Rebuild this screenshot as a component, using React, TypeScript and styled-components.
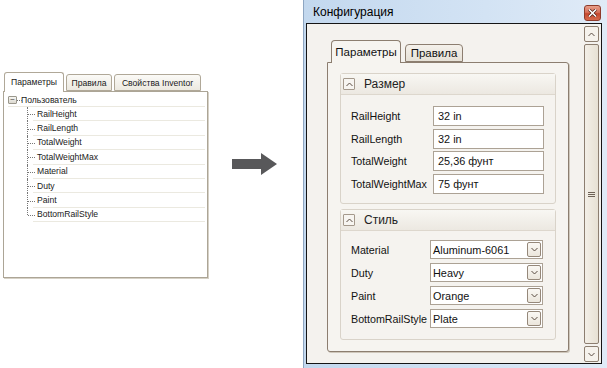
import React from "react";
import styled, { createGlobalStyle } from "styled-components";

const GlobalStyle = createGlobalStyle`
  html, body { margin: 0; padding: 0; background: #fff; }
  body { font-family: "Liberation Sans", Arial, sans-serif; }
  * { box-sizing: border-box; }
`;

const treeItems = ["RailHeight", "RailLength", "TotalWeight", "TotalWeightMax", "Material", "Duty", "Paint", "BottomRailStyle"];

const sizeFields = [
  { label: "RailHeight", value: "32 in" },
  { label: "RailLength", value: "32 in" },
  { label: "TotalWeight", value: "25,36 фунт" },
  { label: "TotalWeightMax", value: "75 фунт" },
];

const styleFields = [
  { label: "Material", value: "Aluminum-6061" },
  { label: "Duty", value: "Heavy" },
  { label: "Paint", value: "Orange" },
  { label: "BottomRailStyle", value: "Plate" },
];

const Chevron = ({ up }: { up?: boolean }) => (
  <svg width="7" height="5" viewBox="0 0 7 5">
    <polyline points={up ? "0.5,4 3.5,1 6.5,4" : "0.5,1 3.5,4 6.5,1"} fill="none" stroke="#5a4d42" strokeWidth="1" />
  </svg>
);

export default function App() {
  return (
    <>
      <GlobalStyle />
      <Page>
        <LeftPanel>
          <SmallTabRow>
            <SmallTab active width={60}>Параметры</SmallTab>
            <SmallTab width={46}>Правила</SmallTab>
            <SmallTab width={87}>Свойства Inventor</SmallTab>
          </SmallTabRow>
          <TreeBox>
            <RootRow>
              <MinusBox>−</MinusBox>
              <RootLabel>Пользователь</RootLabel>
            </RootRow>
            <TreeChildren>
              {treeItems.map((item, i) => (
                <TreeRow key={item} last={i === treeItems.length - 1}>
                  <TreeLabel>{item}</TreeLabel>
                </TreeRow>
              ))}
            </TreeChildren>
          </TreeBox>
        </LeftPanel>

        <ArrowBox>
          <svg width="47" height="23" viewBox="0 0 47 23">
            <polygon points="0,6 29,6 29,0 45,11 29,22 29,16 0,16" fill="#58585a" />
          </svg>
        </ArrowBox>

        <Window>
          <TitleBar>
            <Title>Конфигурация</Title>
            <CloseButton>
              <svg width="9" height="8" viewBox="0 0 9 8">
                <path d="M1 0.5 L8 7.5 M8 0.5 L1 7.5" stroke="#4a1a10" strokeWidth="3" />
                <path d="M1 0.5 L8 7.5 M8 0.5 L1 7.5" stroke="#fff" strokeWidth="1.6" />
              </svg>
            </CloseButton>
          </TitleBar>
          <Client>
            <ClientContent>
              <TabRow>
                <Tab active width={70}>Параметры</Tab>
                <Tab width={58}>Правила</Tab>
              </TabRow>
              <TabPanel>
                <Group>
                  <GroupHeader>
                    <ExpandButton><Chevron up /></ExpandButton>
                    <GroupTitle>Размер</GroupTitle>
                  </GroupHeader>
                  <GroupBody top={11} gap={2.7}>
                    {sizeFields.map(f => (
                      <FieldRow key={f.label} labelWidth={82}>
                        <FieldLabel>{f.label}</FieldLabel>
                        <TextInput>{f.value}</TextInput>
                      </FieldRow>
                    ))}
                  </GroupBody>
                </Group>
                <Group>
                  <GroupHeader>
                    <ExpandButton><Chevron up /></ExpandButton>
                    <GroupTitle>Стиль</GroupTitle>
                  </GroupHeader>
                  <GroupBody top={9} gap={4}>
                    {styleFields.map(f => (
                      <FieldRow key={f.label} labelWidth={79}>
                        <FieldLabel>{f.label}</FieldLabel>
                        <Combo>
                          <ComboText>{f.value}</ComboText>
                          <ComboButton><Chevron /></ComboButton>
                        </Combo>
                      </FieldRow>
                    ))}
                  </GroupBody>
                </Group>
              </TabPanel>
            </ClientContent>
            <ScrollBar>
              <ScrollButton><Chevron up /></ScrollButton>
              <ScrollThumb>
                <Grip>
                  <span />
                  <span />
                  <span />
                </Grip>
              </ScrollThumb>
              <ScrollButton><Chevron /></ScrollButton>
            </ScrollBar>
          </Client>
        </Window>
      </Page>
    </>
  );
}

const Page = styled.div`
  display: flex;
  align-items: flex-start;
  width: 607px;
  height: 368px;
  overflow: hidden;
  background: #fff;
`;

/* ---------- left picture ---------- */

const LeftPanel = styled.div`
  width: 205px;
  margin: 72px 0 0 3px;
  font-family: "Liberation Sans", Arial, sans-serif;
  font-size: 8.6px;
  color: #1a1a1a;
`;

const SmallTabRow = styled.div`
  display: flex;
  align-items: flex-end;
  gap: 2px;
  height: 19px;
  padding-left: 1px;
  position: relative;
  z-index: 1;
`;

const SmallTab = styled.div<{ active?: boolean; width: number }>`
  width: ${p => p.width}px;
  height: ${p => (p.active ? 20 : 17)}px;
  margin-bottom: ${p => (p.active ? -1 : 0)}px;
  display: flex;
  align-items: center;
  justify-content: center;
  padding-bottom: ${p => (p.active ? 2 : 0)}px;
  border: 1px solid #b0a898;
  border-bottom: ${p => (p.active ? "none" : "1px solid #b0a898")};
  border-radius: 3px 3px 0 0;
  background: ${p => (p.active ? "#fff" : "linear-gradient(#fbfaf7, #ece9e0)")};
  white-space: nowrap;
`;

const TreeBox = styled.div`
  height: 187px;
  border: 1px solid #aca596;
  box-shadow: 1px 1px 0 #d6d1c6;
  background: #fff;
  padding-top: 1px;
`;

const RootRow = styled.div`
  display: flex;
  align-items: center;
  height: 14px;
  margin-left: 4px;
  margin-right: 2px;
  border-bottom: 1px solid #ebe9e0;
`;

const MinusBox = styled.div`
  width: 9px;
  height: 8px;
  border: 1px solid #9a978c;
  border-radius: 1px;
  background: linear-gradient(#f6f6f2, #dcd9d0);
  font-size: 8px;
  line-height: 5px;
  text-align: center;
  color: #444;
  position: relative;
  &::after {
    content: "";
    position: absolute;
    left: 8px;
    top: 3px;
    width: 5px;
    border-top: 1px dotted #777;
  }
`;

const RootLabel = styled.span`
  margin-left: 4px;
`;

const TreeChildren = styled.div`
  margin-left: 23px;
  margin-right: 2px;
`;

const TreeRow = styled.div<{ last?: boolean }>`
  position: relative;
  height: 14.4px;
  display: flex;
  align-items: center;
  padding-left: 10px;
  &::before {
    content: "";
    position: absolute;
    left: 0;
    top: 0;
    height: ${p => (p.last ? "50%" : "100%")};
    border-left: 1px dotted #777;
  }
  &::after {
    content: "";
    position: absolute;
    left: 1px;
    top: 50%;
    width: 7px;
    border-top: 1px dotted #777;
  }
`;

const TreeLabel = styled.span`
  flex: 1;
  height: 100%;
  display: flex;
  align-items: center;
  border-bottom: 1px solid #ebe9e0;
  margin-left: -4px;
  padding-left: 4px;
`;

const ArrowBox = styled.div`
  margin: 153px 0 0 24px;
  display: flex;
`;

/* ---------- window ---------- */

const Window = styled.div`
  margin-left: auto;
  width: 304px;
  height: 368px;
  display: flex;
  flex-direction: column;
  border-left: 1px solid #8ea6c2;
  background: linear-gradient(90deg, #c3d8ee 0%, #d3e3f4 60%, #e0ebf7 100%);
  font-family: "Liberation Sans", Arial, sans-serif;
  color: #111;
`;

const TitleBar = styled.div`
  height: 23px;
  display: flex;
  align-items: center;
  justify-content: space-between;
  padding: 0 6px 0 9px;
`;

const Title = styled.span`
  font-size: 12px;
  color: #000;
`;

const CloseButton = styled.div`
  width: 17px;
  height: 16px;
  margin-top: 2px;
  display: flex;
  align-items: center;
  justify-content: center;
  border: 1px solid #8d3b2b;
  border-radius: 3px;
  background: linear-gradient(#e8a08c 0%, #d7705a 45%, #c5482f 55%, #d66a4c 100%);
`;

const Client = styled.div`
  flex: 1;
  display: flex;
  margin: 0 5px 4px 2px;
  border: 1px solid #151515;
  background: #f4f2ee;
`;

const ClientContent = styled.div`
  flex: 1;
  padding: 16px 0 0 20px;
`;

const TabRow = styled.div`
  display: flex;
  align-items: flex-end;
  gap: 4px;
  height: 22px;
  padding-left: 4px;
  position: relative;
  z-index: 1;
`;

const Tab = styled.div<{ active?: boolean; width: number }>`
  width: ${p => p.width}px;
  height: ${p => (p.active ? 23 : 18)}px;
  margin-bottom: ${p => (p.active ? -1 : 0)}px;
  display: flex;
  align-items: center;
  justify-content: center;
  padding-bottom: ${p => (p.active ? 1 : 0)}px;
  border: 1px solid #8c7e70;
  border-bottom: ${p => (p.active ? "none" : "1px solid #8c7e70")};
  border-radius: 4px 4px 0 0;
  background: ${p => (p.active ? "#f6f4f0" : "linear-gradient(#f4f1eb, #e6e1d7)")};
  font-size: 11.5px;
  white-space: nowrap;
`;

const TabPanel = styled.div`
  width: 242px;
  height: 290px;
  display: flex;
  flex-direction: column;
  gap: 5px;
  padding: 10px 12px 0 12px;
  border: 1px solid #8c7e70;
  border-radius: 0 3px 3px 3px;
  box-shadow: 1px 1px 0 #cfc7bb;
  background: #f6f4f0;
`;

const Group = styled.div`
  height: 131px;
  border: 1px solid #d9d3c9;
  border-radius: 3px;
  background: #f5f3ef;
`;

const GroupHeader = styled.div`
  height: 21px;
  display: flex;
  align-items: center;
  gap: 9px;
  padding-left: 2px;
  border-bottom: 1px solid #ddd7cd;
  background: linear-gradient(#f8f7f3, #ece8e1);
`;

const ExpandButton = styled.div`
  width: 12px;
  height: 12px;
  display: flex;
  align-items: center;
  justify-content: center;
  border: 1px solid #a4998c;
  border-radius: 1px;
  background: #f7f5f1;
`;

const GroupTitle = styled.span`
  font-size: 12px;
  color: #222;
`;

const GroupBody = styled.div<{ top: number; gap: number }>`
  display: flex;
  flex-direction: column;
  gap: ${p => p.gap}px;
  padding: ${p => p.top}px 0 0 10px;
`;

const FieldRow = styled.div<{ labelWidth: number }>`
  display: grid;
  grid-template-columns: ${p => p.labelWidth}px auto;
  align-items: center;
`;

const FieldLabel = styled.span`
  font-size: 10.7px;
  color: #111;
  white-space: nowrap;
`;

const TextInput = styled.div`
  width: 111px;
  height: 20px;
  display: flex;
  align-items: center;
  padding-left: 4px;
  border: 1px solid #aca295;
  background: #fff;
  font-size: 10.9px;
`;

const Combo = styled.div`
  width: 113px;
  height: 19px;
  display: flex;
  align-items: center;
  justify-content: space-between;
  padding: 0 1px 0 2px;
  border: 1px solid #aca295;
  background: #fff;
`;

const ComboText = styled.span`
  font-size: 10.9px;
`;

const ComboButton = styled.div`
  width: 14px;
  height: 15px;
  display: flex;
  align-items: center;
  justify-content: center;
  border: 1px solid #95887a;
  border-radius: 2px;
  background: linear-gradient(#faf8f4, #ebe6dc);
`;

const ScrollBar = styled.div`
  width: 15px;
  display: flex;
  flex-direction: column;
  gap: 2px;
  margin: 2px 2px 1px 0;
`;

const ScrollButton = styled.div`
  height: 16px;
  display: flex;
  align-items: center;
  justify-content: center;
  border: 1px solid #8c7e70;
  border-radius: 2px;
  background: #f5f2ec;
`;

const ScrollThumb = styled.div`
  flex: 1;
  display: flex;
  align-items: center;
  justify-content: center;
  border: 1px solid #8c7e70;
  border-radius: 2px;
  background: linear-gradient(90deg, #f3efe7, #e7e1d4);
`;

const Grip = styled.div`
  display: flex;
  flex-direction: column;
  gap: 1px;
  span {
    display: block;
    width: 7px;
    height: 1px;
    background: #6e6256;
  }
`;
